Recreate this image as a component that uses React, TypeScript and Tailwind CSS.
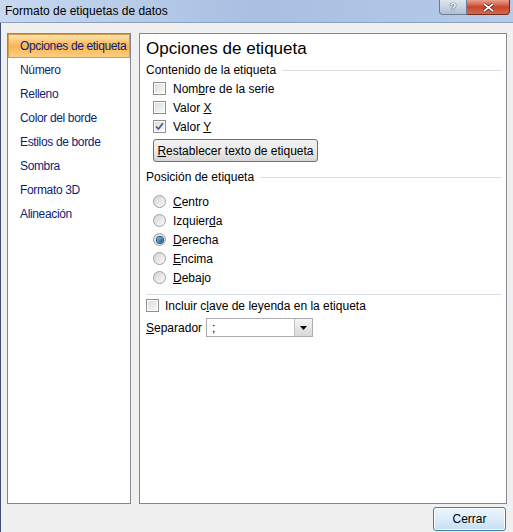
import { ReactNode } from 'react';

const navItems = [
  'Opciones de etiqueta',
  'Número',
  'Relleno',
  'Color del borde',
  'Estilos de borde',
  'Sombra',
  'Formato 3D',
  'Alineación',
];

function CheckBox({ checked = false }: { checked?: boolean }) {
  return (
    <span className="relative inline-flex h-[13px] w-[13px] shrink-0 items-center justify-center border border-[#8f8f8f] bg-white">
      <span className="absolute inset-[1px] bg-gradient-to-br from-[#dcdcdc] to-[#f8f8f8]" />
      {checked && (
        <svg className="relative" width="9" height="9" viewBox="0 0 9 9">
          <path d="M1 4.5 L3.4 7 L8 1.2" fill="none" stroke="#3d5a96" strokeWidth="1.7" />
        </svg>
      )}
    </span>
  );
}

function Radio({ checked = false }: { checked?: boolean }) {
  return (
    <span className="relative inline-flex h-[13px] w-[13px] shrink-0 items-center justify-center rounded-full border border-[#a0a0a0] bg-gradient-to-br from-[#d4d4d4] to-[#fbfbfb]">
      {checked && (
        <span className="h-[6px] w-[6px] rounded-full bg-gradient-to-br from-[#7cc4f2] to-[#0d4f8f] ring-1 ring-[#1c5180]" />
      )}
    </span>
  );
}

function SectionTitle({ children }: { children: ReactNode }) {
  return (
    <div className="flex h-[18px] items-center gap-[6px]">
      <span>{children}</span>
      <span className="h-px flex-1 bg-[#d5dfe5]" />
    </div>
  );
}

function CheckRow({ label, checked }: { label: ReactNode; checked?: boolean }) {
  return (
    <div className="flex h-[19px] items-center gap-[7px] pl-[7px]">
      <CheckBox checked={checked} />
      <span>{label}</span>
    </div>
  );
}

function RadioRow({ label, checked }: { label: ReactNode; checked?: boolean }) {
  return (
    <div className="flex h-[19px] items-center gap-[7px] pl-[7px]">
      <Radio checked={checked} />
      <span>{label}</span>
    </div>
  );
}

export default function App() {
  return (
    <div
      className="flex h-[532px] w-[513px] flex-col overflow-hidden text-[12px] text-black"
      style={{ fontFamily: '"Liberation Sans", Arial, sans-serif' }}
    >
      {/* title bar */}
      <div className="relative flex h-[23px] shrink-0 items-center border-b border-[#8aa0c0] bg-gradient-to-r from-[#c8d9ef] via-[#a8bfe2] to-[#b6cbe8] pl-[5px]">
        <span className="text-[12px] text-black">Formato de etiquetas de datos</span>
        <div className="absolute right-[3px] top-0 flex">
          <div className="flex h-[15px] w-[28px] items-center justify-center rounded-bl-[4px] border border-t-0 border-[#6d7c93] bg-gradient-to-b from-[#dfe6f0] to-[#b2c0d4] text-[11px] font-bold text-white [text-shadow:0_0_1px_#333,0_0_1px_#333]">
            ?
          </div>
          <div className="flex h-[15px] w-[43px] items-center justify-center rounded-br-[4px] border border-l-0 border-t-0 border-[#6b2d24] bg-gradient-to-b from-[#e9a08e] via-[#c9452c] to-[#d36a4c]">
            <svg width="11" height="9" viewBox="0 0 11 9">
              <path d="M1 1 L10 8 M10 1 L1 8" stroke="#3a1a14" strokeWidth="3" />
              <path d="M1 1 L10 8 M10 1 L1 8" stroke="white" strokeWidth="1.6" />
            </svg>
          </div>
        </div>
      </div>

      {/* dialog body */}
      <div className="flex flex-1 flex-col border-l border-[#3e4f72] bg-[#f0f0f0] pl-[6px] pt-[10px]">
        <div className="flex h-[471px] gap-[8px]">
          {/* category list */}
          <div className="w-[124px] shrink-0 border border-[#828790] bg-white">
            <ul className="flex flex-col whitespace-nowrap tracking-[-0.35px]">
              {navItems.map((item, i) => (
                <li
                  key={item}
                  className={
                    i === 0
                      ? 'flex h-[24px] items-center border border-[#d59b48] bg-gradient-to-b from-[#fde3ae] via-[#f9b550] to-[#fccf80] pl-[11px] text-[#0f1d74]'
                      : 'flex h-[24px] items-center pl-[12px] text-[#0f1d74]'
                  }
                >
                  {item}
                </li>
              ))}
            </ul>
          </div>

          {/* options */}
          <div className="w-[368px] shrink-0 border border-[#828790] bg-white pl-[6px] pr-[5px] pt-[3px]">
            <div className="h-[24px] text-[17px] leading-[24px]">Opciones de etiqueta</div>
            <SectionTitle>Contenido de la etiqueta</SectionTitle>
            <CheckRow label={<>Nom<u>b</u>re de la serie</>} />
            <CheckRow label={<>Valor <u>X</u></>} />
            <CheckRow label={<>Valor <u>Y</u></>} checked />
            <div className="mt-[3px] pl-[7px]">
              <button className="h-[23px] w-[165px] rounded-[3px] border border-[#707070] bg-gradient-to-b from-[#f2f2f2] via-[#ebebeb] to-[#d6d6d6] text-[12px]">
                <u>R</u>establecer texto de etiqueta
              </button>
            </div>

            <div className="mt-[6px]">
              <SectionTitle>Posición de etiqueta</SectionTitle>
            </div>
            <div className="mt-[6px]">
              <RadioRow label={<><u>C</u>entro</>} />
              <RadioRow label={<>Izquier<u>d</u>a</>} />
              <RadioRow label={<><u>D</u>erecha</>} checked />
              <RadioRow label={<><u>E</u>ncima</>} />
              <RadioRow label={<><u>D</u>ebajo</>} />
            </div>

            <div className="mt-[7px] h-px bg-[#d5dfe5]" />

            <div className="mt-[1px] flex h-[19px] items-center gap-[6px]">
              <CheckBox />
              <span>Incluir c<u>l</u>ave de leyenda en la etiqueta</span>
            </div>
            <div className="mt-[3px] flex h-[19px] items-center">
              <span className="w-[60px]">
                <u>S</u>eparador
              </span>
              <div className="flex h-[19px] w-[107px] items-center border border-[#abadb3] bg-white pl-[5px]">
                <span className="flex-1">;</span>
                <span className="flex h-[17px] w-[18px] items-center justify-center border-l border-[#c0c0c0] bg-gradient-to-b from-[#f4f4f4] to-[#d8d8d8]">
                  <svg width="7" height="4" viewBox="0 0 7 4">
                    <path d="M0 0 H7 L3.5 4 Z" fill="#000" />
                  </svg>
                </span>
              </div>
            </div>
          </div>
        </div>

        <div className="mt-[3px] flex justify-end pr-[7px]">
          <button className="h-[24px] w-[73px] rounded-[3px] border border-[#3c7fb1] bg-gradient-to-b from-[#eaf6fd] via-[#dcecf8] to-[#c4dff2] text-[12px] shadow-[inset_0_0_0_1px_#ffffff]">
            Cerrar
          </button>
        </div>
      </div>
    </div>
  );
}
